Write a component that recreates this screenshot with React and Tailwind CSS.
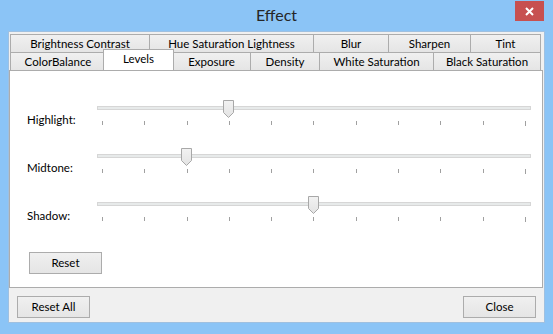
import React from "react";

const rowOne = [
  { label: "Brightness Contrast", w: 139 },
  { label: "Hue Saturation Lightness", w: 164 },
  { label: "Blur", w: 75 },
  { label: "Sharpen", w: 82 },
  { label: "Tint", w: 71 },
];

const rowTwo = [
  { label: "ColorBalance", w: 95 },
  { label: "Levels", w: 67, active: true },
  { label: "Exposure", w: 78 },
  { label: "Density", w: 69 },
  { label: "White Saturation", w: 114 },
  { label: "Black Saturation", w: 108 },
];

const sliders = [
  { label: "Highlight:", value: 3 },
  { label: "Midtone:", value: 2 },
  { label: "Shadow:", value: 5 },
];

function Tab({ label, w, active }) {
  if (active) {
    return (
      <div
        style={{ width: w + 4 }}
        className="relative z-10 -mx-[2px] -mt-[3px] h-[21px] border border-b-0 border-[#acacac] bg-white text-center leading-[17px]"
      >
        {label}
      </div>
    );
  }
  return (
    <div
      style={{ width: w }}
      className="h-[18px] border border-b-0 border-r-0 border-[#acacac] bg-gradient-to-b from-[#f0f0f0] to-[#e5e5e5] text-center leading-[17px] last:border-r"
    >
      {label}
    </div>
  );
}

function Thumb({ value }) {
  const center = 5 + 42.3 * value;
  return (
    <svg
      width="11"
      height="19"
      viewBox="0 0 11 19"
      className="absolute top-0"
      style={{ left: Math.round(center - 5.5) }}
    >
      <defs>
        <linearGradient id="thumbfill" x1="0" y1="0" x2="0" y2="1">
          <stop offset="0" stopColor="#f2f2f2" />
          <stop offset="1" stopColor="#e3e3e3" />
        </linearGradient>
      </defs>
      <path
        d="M0.5 0.5 H10.5 V12.5 L5.5 17.5 L0.5 12.5 Z"
        fill="url(#thumbfill)"
        stroke="#a8a8a8"
      />
    </svg>
  );
}

function SliderRow({ label, value }) {
  return (
    <div className="flex h-[26px]">
      <div className="w-[70px] pt-[12px] leading-[16px]">{label}</div>
      <div className="relative h-[26px] w-[434px]">
        <div className="mt-[6px] h-[4px] border border-[#d6d6d6] bg-[#e7eaea]" />
        <div className="mt-[11px] flex justify-between px-[5px]">
          {Array.from({ length: 11 }).map((_, i) => (
            <div
              key={i}
              className={`w-px bg-[#a0a0a0] ${i === 10 ? "h-[5px]" : "h-[4px]"}`}
            />
          ))}
        </div>
        <Thumb value={value} />
      </div>
    </div>
  );
}

function Button({ children }) {
  return (
    <button className="h-[22px] w-[73px] border border-[#acacac] bg-gradient-to-b from-[#f0f0f0] to-[#e5e5e5] text-center leading-[20px] text-black">
      {children}
    </button>
  );
}

export default function App() {
  return (
    <div
      className="flex h-[334px] w-[553px] flex-col bg-[#8bc4f6] px-[8px] pb-[11px] text-[11.5px] text-black"
      style={{ fontFamily: 'Lato, "Noto Sans", sans-serif' }}
    >
      {/* title bar */}
      <div className="relative flex h-[31px] items-center justify-center">
        <span className="pb-[1px] text-[16px] text-[#262626]">Effect</span>
        <div className="absolute right-[1px] top-[1px] flex h-[20px] w-[29px] items-center justify-center bg-[#c75050]">
          <svg width="9" height="9" viewBox="0 0 9 9">
            <path d="M1 1 L8 8 M8 1 L1 8" stroke="#fff" strokeWidth="2" />
          </svg>
        </div>
      </div>

      {/* client */}
      <div className="flex flex-1 flex-col border border-[#9fc0e0] bg-[#f0f0f0] pt-[2px]">
        <div className="ml-[1px] flex">
          {rowOne.map((t) => (
            <Tab key={t.label} {...t} />
          ))}
        </div>
        <div className="ml-[1px] flex items-end">
          {rowTwo.map((t) => (
            <Tab key={t.label} {...t} />
          ))}
        </div>

        <div className="h-[218px] w-[534px] border border-[#acacac] bg-white pl-[17px] pt-[29px]">
          <div className="flex flex-col gap-[22px]">
            {sliders.map((s) => (
              <SliderRow key={s.label} {...s} />
            ))}
          </div>
          <div className="mt-[30px] pl-[2px]">
            <Button>Reset</Button>
          </div>
        </div>

        <div className="flex justify-between px-[8px] pt-[8px]">
          <Button>Reset All</Button>
          <Button>Close</Button>
        </div>
      </div>
    </div>
  );
}
